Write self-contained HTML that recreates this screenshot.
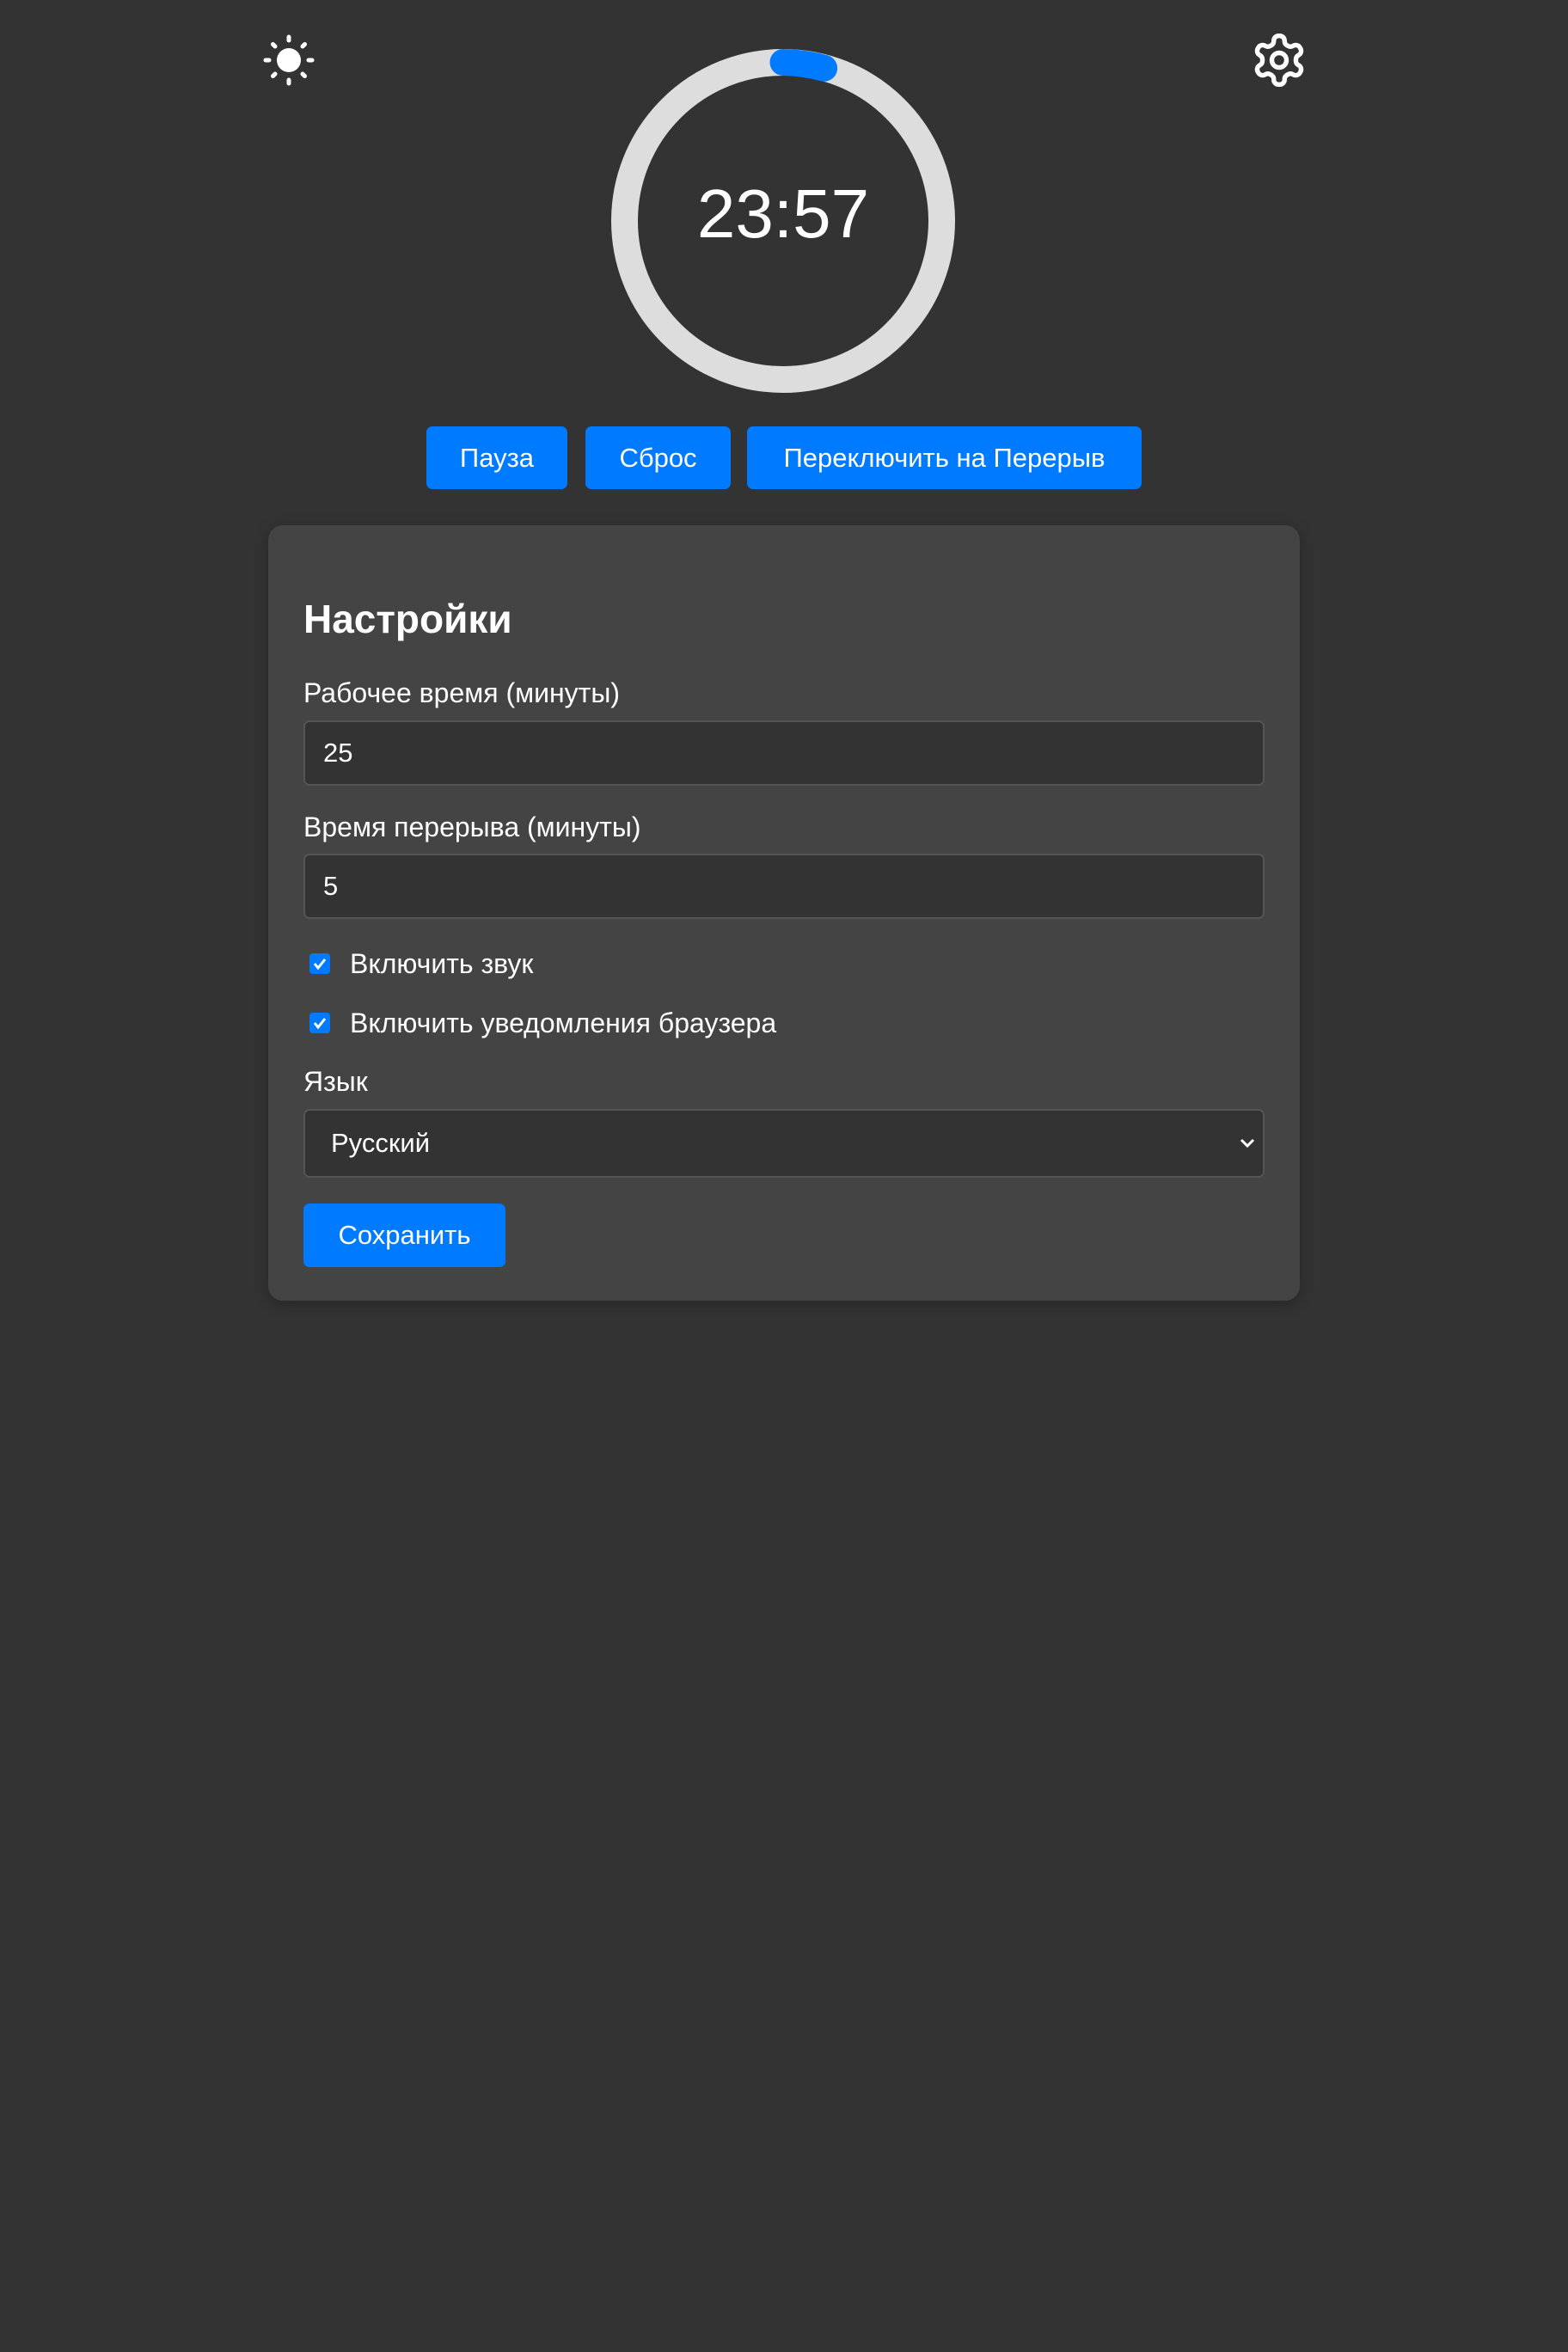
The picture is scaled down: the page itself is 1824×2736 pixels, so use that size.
<!DOCTYPE html>
<html><head><meta charset="utf-8"><style>
html,body{margin:0;padding:0;background:#333;width:1824px;height:2736px;overflow:hidden;font-family:"Liberation Sans",sans-serif;color:#fff}
.abs{position:absolute}
.btn{position:absolute;background:#007bff;border-radius:7px;color:#fff;font-size:31px;display:flex;align-items:center;justify-content:center;height:73px;top:496px}
.card{position:absolute;left:312px;top:611px;width:1200px;height:902px;background:#444;border-radius:17px;box-shadow:0 4px 16px rgba(0,0,0,.25)}
.lbl{position:absolute;left:41px;font-size:32px;line-height:34px}
.inp{position:absolute;left:41px;width:1118px;background:#333;border:2px solid #555;border-radius:7px;box-sizing:border-box;font-size:31px;display:flex;align-items:center;padding-left:21px}
.cb{position:absolute;left:48px;width:24px;height:24px;background:#007bff;border-radius:4px}
</style></head><body>
<svg class="abs" style="left:296px;top:30px" width="80" height="80" viewBox="-40 -40 80 80">
<circle r="14" fill="#fff"/>
<g stroke="#fff" stroke-width="5" stroke-linecap="round">
<line x1="0" y1="-23" x2="0" y2="-27"/><line x1="0" y1="23" x2="0" y2="27"/>
<line x1="-23" y1="0" x2="-27" y2="0"/><line x1="23" y1="0" x2="27" y2="0"/>
<line x1="16" y1="-16" x2="18.5" y2="-18.5"/><line x1="-16" y1="-16" x2="-18.5" y2="-18.5"/>
<line x1="16" y1="16" x2="18.5" y2="18.5"/><line x1="-16" y1="16" x2="-18.5" y2="18.5"/>
</g></svg>
<svg class="abs" style="left:1454px;top:36px" width="68" height="68" viewBox="0 0 24 24" fill="none" stroke="#fff" stroke-width="1.9" stroke-linecap="round" stroke-linejoin="round">
<path d="M12.22 2h-.44a2 2 0 0 0-2 2v.18a2 2 0 0 1-1 1.730l-.43.25a2 2 0 0 1-2 0l-.15-.08a2 2 0 0 0-2.73.73l-.22.38a2 2 0 0 0 .73 2.73l.15.1a2 2 0 0 1 1 1.72v.51a2 2 0 0 1-1 1.74l-.15.09a2 2 0 0 0-.73 2.73l.22.38a2 2 0 0 0 2.73.73l.15-.08a2 2 0 0 1 2 0l.43.25a2 2 0 0 1 1 1.73V20a2 2 0 0 0 2 2h.44a2 2 0 0 0 2-2v-.18a2 2 0 0 1 1-1.73l.43-.25a2 2 0 0 1 2 0l.15.08a2 2 0 0 0 2.73-.73l.22-.39a2 2 0 0 0-.73-2.730l-.15-.08a2 2 0 0 1-1-1.74v-.5a2 2 0 0 1 1-1.74l.15-.09a2 2 0 0 0 .73-2.73l-.22-.38a2 2 0 0 0-2.73-.73l-.15.08a2 2 0 0 1-2 0l-.43-.25a2 2 0 0 1-1-1.73V4a2 2 0 0 0-2-2z"/>
<circle cx="12" cy="12" r="3"/></svg>
<svg class="abs" style="left:0;top:0" width="1824" height="480">
<circle cx="911" cy="257" r="184.5" fill="none" stroke="#ddd" stroke-width="31"/>
<path d="M911 72.5 A184.5 184.5 0 0 1 958.6 79.3" fill="none" stroke="#007bff" stroke-width="31" stroke-linecap="round"/>
<text x="911" y="276" text-anchor="middle" font-family="Liberation Sans" font-size="80" fill="#fff">23:57</text>
</svg>
<div class="btn" style="left:496px;width:164px">Пауза</div>
<div class="btn" style="left:681px;width:169px">Сброс</div>
<div class="btn" style="left:869px;width:459px">Переключить на Перерыв</div>
<div class="card">
<div class="abs" style="left:41px;top:84px;font-size:46px;font-weight:bold;line-height:50px">Настройки</div>
<div class="lbl" style="top:178px">Рабочее время (минуты)</div>
<div class="inp" style="top:227px;height:76px">25</div>
<div class="lbl" style="top:334px">Время перерыва (минуты)</div>
<div class="inp" style="top:382px;height:76px">5</div>
<div class="cb" style="top:498px"><svg width="24" height="24" viewBox="0 0 24 24"><path d="M6 12l4 5 8-10" stroke="#fff" stroke-width="3" fill="none"/></svg></div>
<div class="lbl" style="left:95px;top:493px">Включить звук</div>
<div class="cb" style="top:567px"><svg width="24" height="24" viewBox="0 0 24 24"><path d="M6 12l4 5 8-10" stroke="#fff" stroke-width="3" fill="none"/></svg></div>
<div class="lbl" style="left:95px;top:562px">Включить уведомления браузера</div>
<div class="lbl" style="top:630px">Язык</div>
<div class="inp" style="top:679px;height:80px;padding-left:30px">Русский
<svg class="abs" style="right:8px;top:30px" width="20" height="16" viewBox="0 0 20 16"><path d="M3 4l7 7 7-7" stroke="#fff" stroke-width="3" fill="none"/></svg></div>
<div class="abs" style="left:41px;top:789px;width:235px;height:74px;background:#007bff;border-radius:7px;font-size:31px;display:flex;align-items:center;justify-content:center">Сохранить</div>
</div>
</body></html>
